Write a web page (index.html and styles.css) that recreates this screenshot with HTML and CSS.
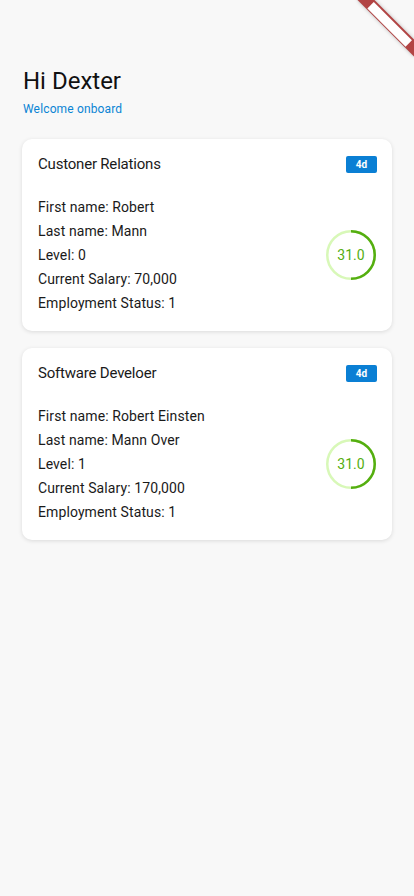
FILE: index.html
```html
<!DOCTYPE html>
<html lang="en">
<head>
<meta charset="utf-8">
<title>Hi Dexter</title>
<link rel="stylesheet" href="styles.css">
</head>
<body>
<div class="corner">
  <div class="banner"><span class="banner-text"></span></div>
</div>
<main class="page">
  <header class="greeting">
    <h1 class="title">Hi Dexter</h1>
    <p class="subtitle">Welcome onboard</p>
  </header>

  <section class="card">
    <div class="card-head">
      <span class="card-title">Custoner Relations</span>
      <span class="badge">4d</span>
    </div>
    <div class="card-body">
      <ul class="fields">
        <li>First name: Robert</li>
        <li>Last name: Mann</li>
        <li>Level: 0</li>
        <li>Current Salary: 70,000</li>
        <li>Employment Status: 1</li>
      </ul>
      <div class="ring">
        <svg viewBox="0 0 50 50" width="50" height="50">
          <circle cx="25" cy="25" r="23.75" fill="none" stroke="#d8f8b8" stroke-width="2.5"/>
          <path d="M25 1.25 A23.75 23.75 0 0 1 25 48.75" fill="none" stroke="#54ae10" stroke-width="2.5"/>
        </svg>
        <span class="ring-value">31.0</span>
      </div>
    </div>
  </section>

  <section class="card">
    <div class="card-head">
      <span class="card-title">Software Develoer</span>
      <span class="badge">4d</span>
    </div>
    <div class="card-body">
      <ul class="fields">
        <li>First name: Robert Einsten</li>
        <li>Last name: Mann Over</li>
        <li>Level: 1</li>
        <li>Current Salary: 170,000</li>
        <li>Employment Status: 1</li>
      </ul>
      <div class="ring">
        <svg viewBox="0 0 50 50" width="50" height="50">
          <circle cx="25" cy="25" r="23.75" fill="none" stroke="#d8f8b8" stroke-width="2.5"/>
          <path d="M25 1.25 A23.75 23.75 0 0 1 25 48.75" fill="none" stroke="#54ae10" stroke-width="2.5"/>
        </svg>
        <span class="ring-value">31.0</span>
      </div>
    </div>
  </section>
</main>
</body>
</html>
```

FILE: styles.css
```css
html, body {
  margin: 0;
  padding: 0;
  background: #f8f8f8;
  font-family: Roboto, "Noto Sans", "Liberation Sans", sans-serif;
  color: #1a1a1a;
}

body {
  width: 414px;
  min-height: 896px;
  position: relative;
  overflow: hidden;
}

.corner {
  position: absolute;
  top: 0;
  right: 0;
  width: 80px;
  height: 80px;
  overflow: hidden;
  pointer-events: none;
}

.banner {
  position: absolute;
  left: 16px;
  top: 18px;
  width: 80px;
  height: 12px;
  background: #b24444;
  box-shadow: 0 0 4px rgba(0, 0, 0, 0.25);
  transform: rotate(45deg);
  display: flex;
  align-items: center;
  justify-content: center;
}

.banner-text {
  display: block;
  width: 54px;
  height: 9px;
  background: #ffffff;
}

.page {
  padding: 67px 22px 0 22px;
  display: flex;
  flex-direction: column;
}

.greeting {
  padding-left: 1px;
  margin-bottom: 22px;
}

.title {
  margin: 0;
  font-size: 24px;
  line-height: 28px;
  font-weight: 400;
  color: #111;
}

.subtitle {
  margin: 6px 0 0 0;
  font-size: 12px;
  line-height: 16px;
  letter-spacing: 0.15px;
  color: #0a84d4;
}

.card {
  background: #fff;
  border-radius: 10px;
  box-shadow: 0 1px 4px rgba(0, 0, 0, 0.12);
  padding: 15px 16px 16px 16px;
  margin-bottom: 17px;
}

.card-head {
  display: flex;
  align-items: center;
  justify-content: space-between;
  height: 20px;
}

.card-title {
  font-size: 15px;
  line-height: 20px;
  letter-spacing: -0.2px;
  color: #1a1a1a;
}

.badge {
  width: 31px;
  height: 17px;
  border-radius: 2px;
  background: #0a7fd4;
  color: #fff;
  font-size: 10px;
  font-weight: 700;
  display: flex;
  align-items: center;
  justify-content: center;
  margin-right: -1px;
}

.card-body {
  margin-top: 21px;
  display: flex;
  align-items: center;
  justify-content: space-between;
}

.fields {
  list-style: none;
  margin: 0;
  padding: 0;
}

.fields li {
  font-size: 14px;
  line-height: 24px;
  letter-spacing: 0.1px;
  color: #1a1a1a;
}

.ring {
  position: relative;
  width: 50px;
  height: 50px;
  display: flex;
  align-items: center;
  justify-content: center;
}

.ring svg {
  position: absolute;
  left: 0;
  top: 0;
}

.ring-value {
  font-size: 14px;
  color: #54ae10;
}
```
